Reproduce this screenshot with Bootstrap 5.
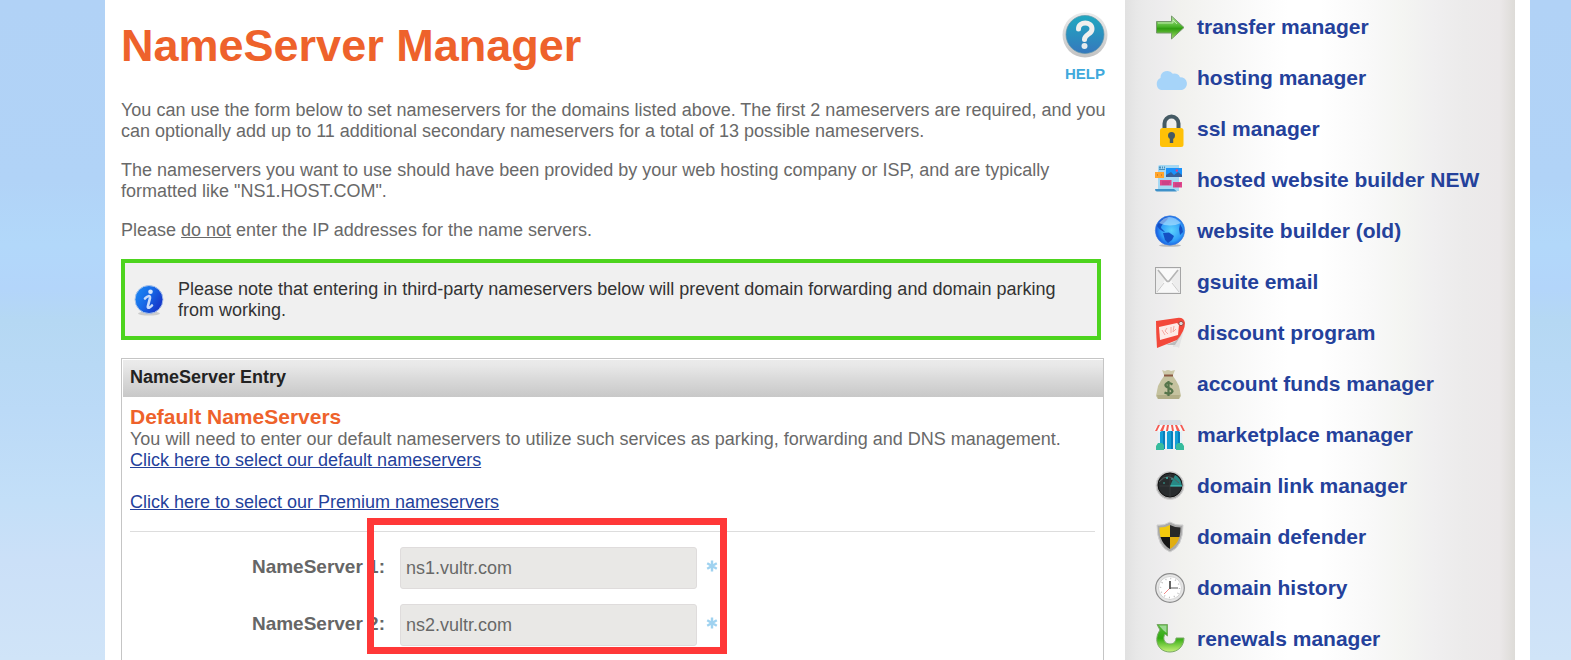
<!DOCTYPE html>
<html lang="en">
<head>
<meta charset="utf-8">
<meta name="viewport" content="width=device-width, initial-scale=1">
<title>NameServer Manager</title>
<link href="https://cdn.jsdelivr.net/npm/bootstrap@5.3.0/dist/css/bootstrap.min.css" rel="stylesheet">
<style>
  body {
    font-family: "Liberation Sans", Arial, sans-serif;
    font-size: 18px;
    line-height: 21px;
    color: #696969;
    background: linear-gradient(#b1d2f6 0, #b1d3f7 180px, #b2d8fa 245px, #b3d5fa 290px, #b5d8f3 320px, #bbdaf7 410px, #c3dff8 500px, #cbe0f8 560px, #d0e4f8 660px) fixed;
  }
  .page-shell { margin: 0 41px 0 105px; padding-right: 15px; min-height: 100vh; }
  .main-pane { padding: 20px 19px 0 16px; min-width: 0; }
  .page-title { font-size: 45px; line-height: 52px; font-weight: 700; color: #ee622b; margin: 0 0 28px; }
  .help-link { font-size: 15px; line-height: 18px; font-weight: 700; color: #3fa9dc; width: 46px; margin: -8px -2px 0 0; }
  .main-pane p { margin-bottom: 18px; }
  .notice { border: 4px solid #4dd41e; background: #f0f0f0; color: #333; margin: 0 5px 18px 0; padding: 16px 36px 15px 9px; gap: 14px; }
  .entry-panel { border: 1px solid #c5c5c5; border-bottom: 0; margin-right: 2px; padding: 1px 0 0 1px; }
  .entry-head { font-size: 18px; line-height: 21px; font-weight: 700; color: #222; margin: 0; padding: 7px 7px 9px; background: linear-gradient(#ebebeb, #e8e8e8 15%, #dadada 50%, #c8c8c8); }
  .entry-body { padding: 8px 8px 16px 7px; }
  .section-title { font-size: 21px; line-height: 24px; font-weight: 700; color: #ee622b; margin: 0; }
  .entry-body a { color: #24419b; }
  .entry-body hr { margin: 18px 0 15px; color: #ccc; opacity: 1; border-top: 1px solid #ddd; }
  .ns-form { gap: 15px; }
  .ns-row label { width: 255px; text-align: right; font-size: 19px; font-weight: 700; color: #666; padding-bottom: 4px; margin-right: 15px; }
  .ns-row .form-control { width: 297px; height: 42px; font-size: 18px; padding: 0 5px; color: #686868; background: #e9e8e6; border: 1px solid #dfdcdc; border-radius: 3px; }
  .ns-row svg { margin: 0 0 4px 9px; }
  .highlight-box { position: absolute; top: -29px; left: 237px; width: 360px; height: 136px; border: 7px solid #ff3838; pointer-events: none; }
  .tool-menu { width: 390px; padding: 1px 10px 0 30px; background: linear-gradient(90deg, #e1e1e1, #e8e8e8 3%, #ebebeb 6%, #eeedee 10%, #f1f1ee 14%, #f6f6f5 24%, #fcfcfc 36%, #fff 42%, #fff 50%, #f8f8f8 64%, #f4f5f2 71%, #f0eff0 79%, #ecebeb 87%, #ebe8e9 96%, #dddbd7); }
  .tool-menu a { height: 51px; gap: 6px; font-size: 21px; line-height: 24px; font-weight: 700; color: #24419b; text-decoration: none; }
  .tool-menu svg { width: 36px; height: 36px; overflow: visible; flex: none; }
</style>
</head>
<body>
<div class="page-shell d-flex bg-white">
  <main class="main-pane flex-grow-1">
    <div class="d-flex justify-content-between">
      <h1 class="page-title">NameServer Manager</h1>
      <a class="help-link text-decoration-none text-center" href="#">
        <svg class="d-block" width="46" height="53" viewBox="0 0 46 53" aria-hidden="true">
          <defs>
            <linearGradient id="hb" x2="0" y2="1"><stop stop-color="#20a8c0"/><stop offset="1" stop-color="#3578bd"/></linearGradient>
            <linearGradient id="hr" x2="0" y2="1"><stop stop-color="#ececec"/><stop offset="1" stop-color="#c2c2c2"/></linearGradient>
          </defs>
          <circle cx="23" cy="23" r="22.500" fill="url(#hr)"/>
          <circle cx="23" cy="22.500" r="19" fill="url(#hb)" stroke="#5d95aa" stroke-width=".7"/>
          <path d="M16.500 17c0-8 13.500-8 13.500 0 0 5.500-7.500 5-7.500 10.500" fill="none" stroke="#f0f0ee" stroke-width="5" stroke-linecap="round"/>
          <circle cx="22.500" cy="34" r="3" fill="#e6ebee"/>
        </svg>
        <span class="d-block">HELP</span>
      </a>
    </div>
    <p>You can use the form below to set nameservers for the domains listed above. The first 2 nameservers are required, and you can optionally add up to 11 additional secondary nameservers for a total of 13 possible nameservers.</p>
    <p>The nameservers you want to use should have been provided by your web hosting company or ISP, and are typically formatted like "NS1.HOST.COM".</p>
    <p>Please <u>do not</u> enter the IP addresses for the name servers.</p>

    <div class="notice d-flex align-items-center" role="note">
      <svg class="flex-shrink-0" width="30" height="31" viewBox="0 0 30 31" aria-hidden="true">
        <defs><linearGradient id="ib" y2=".6"><stop stop-color="#1d8df5"/><stop offset=".5" stop-color="#176be8"/><stop offset="1" stop-color="#1735c8"/></linearGradient></defs>
        <ellipse cx="15" cy="28.500" rx="11" ry="2" fill="#ccc"/>
        <circle cx="15" cy="14.500" r="14" fill="url(#ib)" stroke="#a8c2ea" stroke-width="1"/>
        <circle cx="16.500" cy="6.800" r="2.300" fill="#d7e6fd"/>
        <path d="M11 13.500c2-2.500 5.500-3.500 5-.5l-2.200 8.500c-.3 2.500 2.500 1 4.200-1" fill="none" stroke="#c9dcfb" stroke-width="2.600" stroke-linecap="round"/>
      </svg>
      <div>Please note that entering in third-party nameservers below will prevent domain forwarding and domain parking from working.</div>
    </div>

    <section class="entry-panel">
      <h2 class="entry-head">NameServer Entry</h2>
      <div class="entry-body">
        <h3 class="section-title">Default NameServers</h3>
        <div>You will need to enter our default nameservers to utilize such services as parking, forwarding and DNS management.</div>
        <a class="d-inline-block" href="#">Click here to select our default nameservers</a>
        <div><br><a href="#">Click here to select our Premium nameservers</a></div>
        <hr>
        <form class="ns-form position-relative d-flex flex-column">
          <div class="ns-row d-flex align-items-center">
            <label for="ns1">NameServer 1:</label>
            <input class="form-control" type="text" id="ns1" value="ns1.vultr.com">
            <svg width="12" height="14" viewBox="0 0 12 14" aria-hidden="true"><path d="M6 1.500v11M1.200 4.200l9.600 5.600M1.200 9.800l9.600-5.600" stroke="#9fd2f0" stroke-width="2.400"/></svg>
          </div>
          <div class="ns-row d-flex align-items-center">
            <label for="ns2">NameServer 2:</label>
            <input class="form-control" type="text" id="ns2" value="ns2.vultr.com">
            <svg width="12" height="14" viewBox="0 0 12 14" aria-hidden="true"><path d="M6 1.500v11M1.200 4.200l9.600 5.600M1.200 9.800l9.600-5.600" stroke="#9fd2f0" stroke-width="2.400"/></svg>
          </div>
          <div class="highlight-box"></div>
        </form>
      </div>
    </section>
  </main>

  <nav class="tool-menu flex-shrink-0" aria-label="Account tools">
    <a class="d-flex align-items-center" href="#">
      <svg viewBox="0 0 36 36" aria-hidden="true">
        <defs><linearGradient id="ag" x2="0" y2="1"><stop stop-color="#b8e8a0"/><stop offset=".45" stop-color="#4cb52c"/><stop offset=".55" stop-color="#2f9d10"/><stop offset="1" stop-color="#a5dd6a"/></linearGradient></defs>
        <path d="M1.500 12.500h15V7L29 18.500 16.500 30v-6h-15z" fill="url(#ag)" stroke="#75986a" stroke-width="1"/>
        <path d="M3 14h15v-3l4 4" fill="none" stroke="#ddf5d0" stroke-opacity=".7"/>
      </svg>
      <span>transfer manager</span></a>
    <a class="d-flex align-items-center" href="#">
      <svg viewBox="0 0 36 36" aria-hidden="true"><path d="M6 30a6.500 6.500 0 0 1-.5-12A6.800 6.800 0 0 1 17.800 13.800 5.500 5.500 0 0 1 25 17.200 6.500 6.500 0 0 1 27 30z" fill="#a6d4f9"/></svg>
      <span>hosting manager</span></a>
    <a class="d-flex align-items-center" href="#">
      <svg viewBox="0 0 36 36" aria-hidden="true">
        <path d="M9.500 18v-5.500a7 7 0 0 1 14 0V18" fill="none" stroke="#455a64" stroke-width="4"/>
        <rect x="5" y="17" width="23.500" height="19" rx="2.500" fill="#ffc107"/>
        <circle cx="16.500" cy="24.500" r="3.500" fill="#455a64"/><path d="M14.800 25h3.400v7h-3.400z" fill="#455a64"/>
      </svg>
      <span>ssl manager</span></a>
    <a class="d-flex align-items-center" href="#">
      <svg viewBox="0 0 36 36" aria-hidden="true">
        <path d="M5 3h19v26H3V5q0-2 2-2z" fill="#a5d8f3"/>
        <path d="M4 4.500h2v2H4zm3 0h1v2H7zm2 0h1v2H9zM4 7h6v1H4z" fill="#4b90bd"/>
        <path d="M11 6h16v8.500H11z" fill="#1992fb"/><path d="M11 15v-2l5-3 3 3 4-3 4 3v2z" fill="#35609b"/><circle cx="21.800" cy="8.500" r="1.200" fill="#e83c80"/>
        <path d="M0 10h9v6H0z" fill="#ffa52b"/><path d="m3 12-1 1 1 1m3-2 1 1-1 1" fill="none" stroke="#d27d24" stroke-width=".8"/>
        <path d="M5 18h11.500v5.500H5zM18 20h9v5.500h-9z" fill="#e0458b"/><path d="M7 20h8M7 22h7M20 22h6M20 24h5" stroke="#ae3b82" stroke-width=".8"/>
        <path d="M0 27h19l3 2.500H2q-2 0-2-2.500z" fill="#3e91c9"/>
      </svg>
      <span>hosted website builder NEW</span></a>
    <a class="d-flex align-items-center" href="#">
      <svg viewBox="0 0 36 36" aria-hidden="true">
        <defs><radialGradient id="gl" cx=".55" cy=".5" r=".55"><stop stop-color="#5cd2fc"/><stop offset=".65" stop-color="#309ff8"/><stop offset="1" stop-color="#1555df"/></radialGradient></defs>
        <ellipse cx="15" cy="32.500" rx="11" ry="1.300" fill="#bbb"/>
        <circle cx="15" cy="17.500" r="14.700" fill="url(#gl)" stroke="#4584de" stroke-width=".6"/>
        <path d="M2 13Q5 6 12 4c2 1 0 3-2 5-2 2-4 3-4 6l4 4-2-.5q-4-2-6-5.500zm6 7 6-.5 5 3.500-2 4-4 3-3-3zM25 11q3 4 3 8l-3 3-1-6z" fill="#1450c4"/>
        <path d="M4 10Q14-2 26 10q-11 5-22 0z" fill="#c4e8ff" opacity=".55"/>
      </svg>
      <span>website builder (old)</span></a>
    <a class="d-flex align-items-center" href="#">
      <svg viewBox="0 0 36 36" aria-hidden="true">
        <rect x=".5" y="3.500" width="25" height="26" fill="#ededed" stroke="#a5a5a5"/>
        <path d="M2 5h22L13 18z" fill="#fafafa"/><path d="M2 28 10 16l3 3 3-3 8 12z" fill="#f8f8f8"/>
        <path d="m3 6 8 10q2 3 4 0L23 6" fill="none" stroke="#b5b5b5" stroke-width="1.600"/><path d="m2 28 7-9m15 9-7-9" stroke="#ccc"/>
      </svg>
      <span>gsuite email</span></a>
    <a class="d-flex align-items-center" href="#">
      <svg viewBox="0 0 36 36" aria-hidden="true">
        <path d="m18 29 11-14-5 18q-2-2-6-1z" fill="#e3e3e3"/><path d="m11 30 10-4 6-7-7 11z" fill="#bbb"/>
        <path d="M1 6 22 3q7-1 8 5 0 8-8 17L2 33q-1-14-1-27z" fill="#f3483a"/>
        <path d="m4 12 18-4 2 2-1 10-18 5z" fill="#fdebe7"/>
        <path d="m7 15 3 5m2-7-2 3 3 3m3-7v6m3-7-1 6 3-3" fill="none" stroke="#f6aaa2"/>
        <circle cx="26" cy="8.500" r="2.200" fill="#d7d7d7" stroke="#a3453d"/>
      </svg>
      <span>discount program</span></a>
    <a class="d-flex align-items-center" href="#">
      <svg viewBox="0 0 36 36" aria-hidden="true">
        <path d="m7 4 3 1q3-2 6 0l4-1-2 5H9z" fill="#cdc9aa"/><path d="M9 10h9q3 4 6 10l2 10-2 3H3l-2-3 2-10q3-6 6-10z" fill="#c5c29f"/><path d="M2 29h23l-1 4H3z" fill="#b2ae87"/><path d="M9 9.500h9" stroke="#8b5a44" stroke-width="2"/>
        <path d="M17.500 18.500q-5-3-7 0c-1 4 7 3 7 7q-2 4-8 1M13.500 15v15" fill="none" stroke="#55744a" stroke-width="2.200"/>
      </svg>
      <span>account funds manager</span></a>
    <a class="d-flex align-items-center" href="#">
      <svg viewBox="0 0 36 36" aria-hidden="true">
        <path d="M3 12h24v20H3z" fill="#e5f0f7"/><path d="M5 14h5v18H5zm7 0h6v18h-6zm8 0h5v18h-5z" fill="#129ed5"/><path d="M8 14h2v18H8zm8 0h2v18h-2zm7 0h2v18h-2z" fill="#087ebc"/>
        <path d="M5 3h20l2 5H3z" fill="#d9dfe5"/><path d="M3 8h24l3 5q-1 2-3 0l-2 2-3-2-3 2-4-2-3 2-4-2-3 2-3-2-2 1-1-1z" fill="#fafafa"/>
        <path d="M3 8h2l-3 6H0zm5 0h2l-2 6H5zm4 0h2l-1 6h-2zm4 0h2l1 6h-2zm4 0h2l3 6h-3zm5 0h2l3 6h-2z" fill="#f45b52"/>
        <path d="M1 33v-4l2-3h4l2 2v5zm20 0v-5l2-2h4l2 3v4z" fill="#36bc9d"/>
      </svg>
      <span>marketplace manager</span></a>
    <a class="d-flex align-items-center" href="#">
      <svg viewBox="0 0 36 36" aria-hidden="true">
        <circle cx="15" cy="17.500" r="14" fill="#aaa" stroke="#d5d5d5"/><circle cx="15" cy="17" r="12" fill="#282c2e" stroke="#111"/>
        <path d="M15 18 20 7q6 3 7 11z" fill="#268985"/><path d="M15 18h12" stroke="#45d4c9"/>
        <path d="M4 14q9-11 20 1" fill="none" stroke="#53605f"/><path d="M15 6v23M5 18h10" stroke="#404647" stroke-width=".6"/>
        <circle cx="12" cy="10" r="1" fill="#3db8ac"/><circle cx="9" cy="15" r=".8" fill="#3db8ac"/><circle cx="17" cy="11" r=".8" fill="#5cc"/>
      </svg>
      <span>domain link manager</span></a>
    <a class="d-flex align-items-center" href="#">
      <svg viewBox="0 0 36 36" aria-hidden="true">
        <path d="M15 3q6 4 13 3 0 22-13 27Q2 28 2 6q7 1 13-3z" fill="#a9a9a9" stroke="#d0d0d0"/>
        <path d="M15 6v12H5.500Q4.500 14 4.500 8.500q6 0 10.500-2.500z" fill="#f2c90d"/><path d="M15 6q5 2.500 10.500 2.500 0 5-1 9.500H15z" fill="#282828"/><path d="M5.500 18H15v12q-7-4-9.500-12z" fill="#151515"/><path d="M15 18h9.500Q22 26 15 30z" fill="#e1ae10"/>
      </svg>
      <span>domain defender</span></a>
    <a class="d-flex align-items-center" href="#">
      <svg viewBox="0 0 36 36" aria-hidden="true">
        <circle cx="15" cy="18" r="14.300" fill="#e6e6e6" stroke="#8c8c8c" stroke-width="1.200"/><circle cx="15" cy="18" r="11.500" fill="#fff" stroke="#d5d5d5"/>
        <circle cx="15" cy="18" r="9.500" fill="none" stroke="#bbb" stroke-width="1.500" stroke-dasharray="1 3.974"/>
        <path d="M15 18 9 24" stroke="#f08a8a"/><path d="M15 18h8" stroke="#888" stroke-width="1.400"/><path d="M15 19v-8" stroke="#555" stroke-width="1.800"/>
      </svg>
      <span>domain history</span></a>
    <a class="d-flex align-items-center" href="#">
      <svg viewBox="0 0 36 36" aria-hidden="true">
        <defs><linearGradient id="rg" x2="0" y2="1"><stop stop-color="#55b83c"/><stop offset=".5" stop-color="#31ab10"/><stop offset="1" stop-color="#c8f27b"/></linearGradient></defs>
        <path d="M2 3.500h10.500V15l-2.500-2c-3 5 0 10 5 10 4 0 6-3 6-6h8c0 8-6 14-14 14-12 0-17-12-10-22z" fill="url(#rg)" stroke="#7aa966" stroke-width="1"/>
        <path d="M4 4.500h7.500V12L8 9z" fill="#9ed895"/>
      </svg>
      <span>renewals manager</span></a>
  </nav>
</div>
<script src="https://cdn.jsdelivr.net/npm/bootstrap@5.3.0/dist/js/bootstrap.bundle.min.js"></script>
</body>
</html>
